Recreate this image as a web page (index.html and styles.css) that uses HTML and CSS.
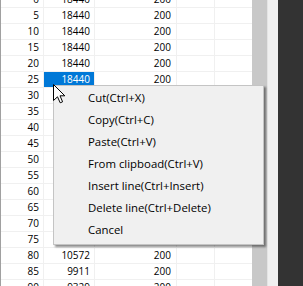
FILE: index.html
```html
<!DOCTYPE html>
<html lang="en">
<head>
    <meta charset="UTF-8">
    <title>Grid context menu</title>
    <link rel="stylesheet" href="styles.css">
</head>
<body>
    <div class="window">
        <div class="grid">
            <div class="row"><div class="cell c1">0</div><div class="cell c2">18440</div><div class="cell c3">200</div><div class="cell c4"></div><div class="cell c5"></div></div>
            <div class="row"><div class="cell c1">5</div><div class="cell c2">18440</div><div class="cell c3">200</div><div class="cell c4"></div><div class="cell c5"></div></div>
            <div class="row"><div class="cell c1">10</div><div class="cell c2">18440</div><div class="cell c3">200</div><div class="cell c4"></div><div class="cell c5"></div></div>
            <div class="row"><div class="cell c1">15</div><div class="cell c2">18440</div><div class="cell c3">200</div><div class="cell c4"></div><div class="cell c5"></div></div>
            <div class="row"><div class="cell c1">20</div><div class="cell c2">18440</div><div class="cell c3">200</div><div class="cell c4"></div><div class="cell c5"></div></div>
            <div class="row"><div class="cell c1">25</div><div class="cell c2 selected">18440</div><div class="cell c3">200</div><div class="cell c4"></div><div class="cell c5"></div></div>
            <div class="row"><div class="cell c1">30</div><div class="cell c2"></div><div class="cell c3"></div><div class="cell c4"></div><div class="cell c5"></div></div>
            <div class="row"><div class="cell c1">35</div><div class="cell c2"></div><div class="cell c3"></div><div class="cell c4"></div><div class="cell c5"></div></div>
            <div class="row"><div class="cell c1">40</div><div class="cell c2"></div><div class="cell c3"></div><div class="cell c4"></div><div class="cell c5"></div></div>
            <div class="row"><div class="cell c1">45</div><div class="cell c2"></div><div class="cell c3"></div><div class="cell c4"></div><div class="cell c5"></div></div>
            <div class="row"><div class="cell c1">50</div><div class="cell c2"></div><div class="cell c3"></div><div class="cell c4"></div><div class="cell c5"></div></div>
            <div class="row"><div class="cell c1">55</div><div class="cell c2"></div><div class="cell c3"></div><div class="cell c4"></div><div class="cell c5"></div></div>
            <div class="row"><div class="cell c1">60</div><div class="cell c2"></div><div class="cell c3"></div><div class="cell c4"></div><div class="cell c5"></div></div>
            <div class="row"><div class="cell c1">65</div><div class="cell c2"></div><div class="cell c3"></div><div class="cell c4"></div><div class="cell c5"></div></div>
            <div class="row"><div class="cell c1">70</div><div class="cell c2"></div><div class="cell c3"></div><div class="cell c4"></div><div class="cell c5"></div></div>
            <div class="row"><div class="cell c1">75</div><div class="cell c2"></div><div class="cell c3"></div><div class="cell c4"></div><div class="cell c5"></div></div>
            <div class="row"><div class="cell c1">80</div><div class="cell c2">10572</div><div class="cell c3">200</div><div class="cell c4"></div><div class="cell c5"></div></div>
            <div class="row"><div class="cell c1">85</div><div class="cell c2">9911</div><div class="cell c3">200</div><div class="cell c4"></div><div class="cell c5"></div></div>
            <div class="row"><div class="cell c1">90</div><div class="cell c2">9329</div><div class="cell c3">200</div><div class="cell c4"></div><div class="cell c5"></div></div>
        </div>
        <div class="scroll-gutter"></div>
        <div class="side-panel"></div>
        <div class="dark-area"></div>

        <!-- context menu shown over the grid -->
        <ul class="context-menu">
            <li>Cut(Ctrl+X)</li>
            <li>Copy(Ctrl+C)</li>
            <li>Paste(Ctrl+V)</li>
            <li>From clipboad(Ctrl+V)</li>
            <li>Insert line(Ctrl+Insert)</li>
            <li>Delete line(Ctrl+Delete)</li>
            <li>Cancel</li>
        </ul>

        <svg class="cursor" width="13" height="20" viewBox="0 0 13 20">
            <path d="M0.5 0.5 L0.5 16.5 L4.5 12.8 L7.2 18.8 L9.6 17.8 L7 11.8 L11.8 11.8 Z" fill="#fff" stroke="#000" stroke-width="1" stroke-linejoin="miter"/>
        </svg>
    </div>
</body>
</html>
```

FILE: styles.css
```css
body {
    margin: 0;
    font-family: 'Open Sans', 'Liberation Sans', sans-serif;
    background: #333333;
}
.window {
    position: relative;
    display: flex;
    width: 303px;
    height: 286px;
    overflow: hidden;
}
.grid {
    width: 251px;
    height: 286px;
    background: #ffffff;
    border-left: 1px solid #a0a0a0;
    overflow: hidden;
}
.row {
    display: flex;
    height: 16px;
}
.row:first-child {
    margin-top: -8px;
}
.cell {
    box-sizing: border-box;
    height: 16px;
    border-right: 1px solid #f0f0f0;
    border-bottom: 1px solid #f0f0f0;
    font-size: 10px;
    line-height: 15px;
    text-align: right;
    padding-right: 4px;
    color: #000;
}
.c1 { width: 43px; }
.c2 { width: 51px; }
.c3 { width: 82px; padding-right: 5px; }
.c4 { width: 38px; }
.c5 { width: 37px; border-right: none; }
.cell.selected {
    background: #0078d7;
    color: #ffffff;
}
.scroll-gutter {
    width: 15px;
    background: #c8c8c8;
    border-right: 1px solid #e4e4e4;
}
.side-panel {
    width: 10px;
    background: #f0f0f0;
}
.dark-area {
    flex: 1;
    background: #333333;
}
.context-menu {
    position: absolute;
    left: 53px;
    top: 85px;
    width: 209px;
    margin: 0;
    padding: 1px 0 3px;
    list-style: none;
    background: #f0f0f0;
    border: 1px solid #c4c4c4;
    box-shadow: 2px 2px 2px rgba(0, 0, 0, 0.45);
}
.context-menu li {
    height: 22px;
    line-height: 22px;
    padding-left: 34px;
    font-size: 11.4px;
    color: #000;
    white-space: nowrap;
}
.cursor {
    position: absolute;
    left: 53px;
    top: 84px;
}
```
